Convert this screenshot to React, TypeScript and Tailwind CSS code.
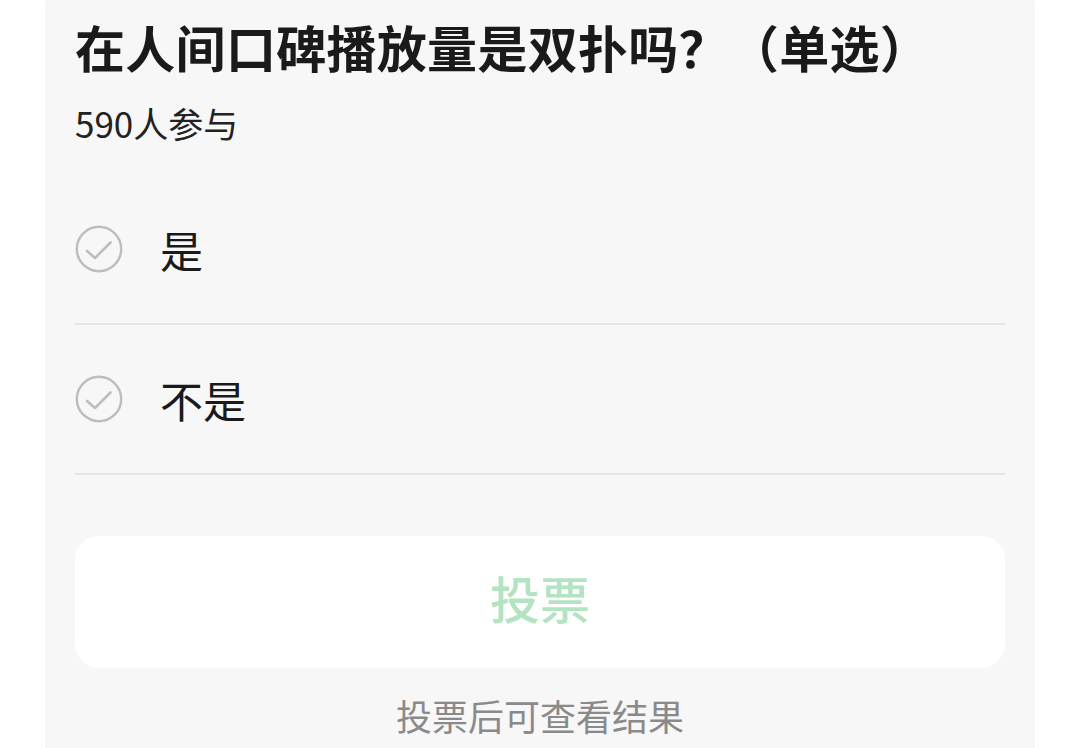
import React from "react";

const Check = () => (
  <svg width="48" height="48" viewBox="0 0 48 48" className="shrink-0">
    <circle cx="24" cy="24" r="22.2" fill="none" stroke="#bdbdbd" strokeWidth="2.4" />
    <path d="M12 26 L20 33 L35.5 17.5" fill="none" stroke="#bdbdbd" strokeWidth="2.6" strokeLinecap="round" strokeLinejoin="round" />
  </svg>
);

export default function App() {
  const font = { fontFamily: '"Noto Sans CJK SC", "Noto Sans", sans-serif' };
  return (
    <div className="w-[1080px] h-[748px] bg-white overflow-hidden" style={font}>
      <div className="mx-[45px] mt-[-14px] h-[800px] rounded-[20px] bg-[#f7f7f7] px-[30px] pt-[28px]">
        <div className="text-[50px] leading-[64px] font-bold text-[#1a1a1a] tracking-[0.3px]">
          在人间口碑播放量是双扑吗？（单选）
        </div>
        <div className="mt-[23px] text-[35px] leading-[44px] text-[#222]">590人参与</div>
        <div className="mt-[30px]">
          {["是", "不是"].map((t) => (
            <div key={t} className="flex items-center h-[150px] border-b-2 border-[#e6e6e6]">
              <Check />
              <span className="ml-[37px] text-[43px] leading-none text-[#1a1a1a]">{t}</span>
            </div>
          ))}
        </div>
        <div className="mt-[61px] h-[132px] rounded-[24px] bg-white flex items-center justify-center pb-[10px]">
          <span className="text-[50px] leading-none text-[#b4e3c1] font-medium">投票</span>
        </div>
        <div className="mt-[25px] text-center text-[36px] leading-[44px] text-[#8a8a8a]">投票后可查看结果</div>
      </div>
    </div>
  );
}
